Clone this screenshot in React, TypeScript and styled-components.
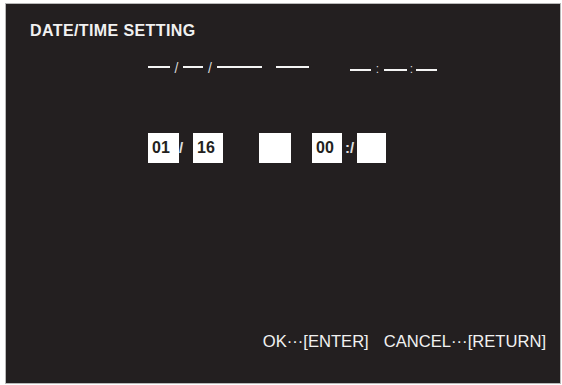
import React from "react";
import styled, { createGlobalStyle } from "styled-components";

const Global = createGlobalStyle`
  html, body { margin: 0; padding: 0; background: #ffffff; }
  body { font-family: "Liberation Sans", Arial, sans-serif; }
`;

const Page = styled.div`
  width: 562px;
  height: 385px;
  padding: 4px 2px 2px 6px;
  box-sizing: border-box;
`;

const Panel = styled.div`
  width: 554px;
  height: 379px;
  background: #231f20;
  box-shadow: 0 0 0 1px #b9b9b9;
  display: flex;
  flex-direction: column;
  padding-top: 19px;
  box-sizing: border-box;
  color: #f1f1f1;
`;

const Title = styled.div`
  font-size: 16px;
  line-height: 16px;
  font-weight: 700;
  letter-spacing: 0.4px;
  padding-left: 24px;
`;

const DashRow = styled.div`
  display: flex;
  align-items: flex-start;
  height: 14px;
  margin-top: 21px;
  padding-left: 142px;
`;

const Dash = styled.span<{ $w: number; $ml?: number; $top: number }>`
  display: block;
  width: ${(p) => p.$w}px;
  height: 2px;
  margin-left: ${(p) => p.$ml ?? 0}px;
  margin-top: ${(p) => p.$top}px;
  background: #f4f4f4;
`;

const Sep = styled.span<{ $w: number; $top: number; $size?: number }>`
  display: block;
  width: ${(p) => p.$w}px;
  text-align: center;
  font-size: ${(p) => p.$size ?? 14}px;
  line-height: 12px;
  margin-top: ${(p) => p.$top}px;
  color: #d8d8d8;
`;

const BoxRow = styled.div`
  display: flex;
  align-items: center;
  margin-top: 59px;
  padding-left: 142px;
  height: 30px;
`;

const Box = styled.div<{ $w: number; $ml?: number }>`
  width: ${(p) => p.$w}px;
  height: 30px;
  margin-left: ${(p) => p.$ml ?? 0}px;
  background: #ffffff;
  color: #231f20;
  font-size: 16px;
  font-weight: 700;
  line-height: 30px;
  padding-left: 4px;
  box-sizing: border-box;
`;

const BoxSep = styled.span<{ $w: number; $align?: string }>`
  display: block;
  width: ${(p) => p.$w}px;
  font-size: 15px;
  font-weight: 700;
  color: #e0e0e0;
  text-align: ${(p) => p.$align ?? "center"};
  line-height: 30px;
`;

const Spacer = styled.div`
  flex: 1;
`;

const Footer = styled.div`
  display: flex;
  justify-content: flex-end;
  gap: 15px;
  padding-right: 14px;
  padding-bottom: 33px;
  font-size: 16.6px;
  line-height: 17px;
  color: #f1f1f1;
`;

export default function App() {
  return (
    <>
      <Global />
      <Page>
        <Panel>
          <Title>DATE/TIME SETTING</Title>
          <DashRow>
            <Dash $w={22} $top={6} />
            <Sep $w={13} $top={2}>/</Sep>
            <Dash $w={20} $top={6} />
            <Sep $w={14} $top={2}>/</Sep>
            <Dash $w={45} $top={6} />
            <Dash $w={33} $ml={14} $top={6} />
            <Dash $w={21} $ml={41} $top={9} />
            <Sep $w={13} $top={3} $size={12}>:</Sep>
            <Dash $w={23} $top={9} />
            <Sep $w={9} $top={3} $size={12}>:</Sep>
            <Dash $w={21} $top={9} />
          </DashRow>
          <BoxRow>
            <Box $w={31}>01</Box>
            <BoxSep $w={14} $align="left">/</BoxSep>
            <Box $w={30}>16</Box>
            <Box $w={32} $ml={36} />
            <Box $w={30} $ml={21}>00</Box>
            <BoxSep $w={15}>:/</BoxSep>
            <Box $w={29} />
          </BoxRow>
          <Spacer />
          <Footer>
            <span>OK···[ENTER]</span>
            <span>CANCEL···[RETURN]</span>
          </Footer>
        </Panel>
      </Page>
    </>
  );
}
